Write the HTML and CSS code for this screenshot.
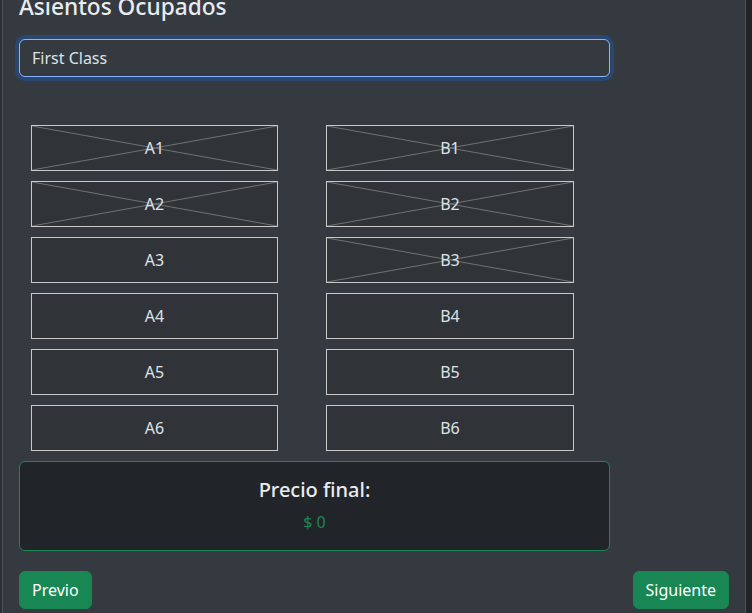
FILE: index.html
```html
<!DOCTYPE html>
<html lang="es">
<head>
<meta charset="utf-8">
<title>Asientos Ocupados</title>
<link rel="stylesheet" href="styles.css">
</head>
<body>
<div class="page">
  <div class="card">
    <h4 class="title">Asientos Ocupados</h4>
    <div class="row">
      <div class="select">First Class</div>
    </div>
    <div class="seats">
      <div class="seat taken"><svg class="cross" viewBox="0 0 100 100" preserveAspectRatio="none"><line x1="0" y1="0" x2="100" y2="100"/><line x1="0" y1="100" x2="100" y2="0"/></svg><span>A1</span></div>
      <div class="seat taken"><svg class="cross" viewBox="0 0 100 100" preserveAspectRatio="none"><line x1="0" y1="0" x2="100" y2="100"/><line x1="0" y1="100" x2="100" y2="0"/></svg><span>B1</span></div>
      <div class="seat taken"><svg class="cross" viewBox="0 0 100 100" preserveAspectRatio="none"><line x1="0" y1="0" x2="100" y2="100"/><line x1="0" y1="100" x2="100" y2="0"/></svg><span>A2</span></div>
      <div class="seat taken"><svg class="cross" viewBox="0 0 100 100" preserveAspectRatio="none"><line x1="0" y1="0" x2="100" y2="100"/><line x1="0" y1="100" x2="100" y2="0"/></svg><span>B2</span></div>
      <div class="seat"><span>A3</span></div>
      <div class="seat taken"><svg class="cross" viewBox="0 0 100 100" preserveAspectRatio="none"><line x1="0" y1="0" x2="100" y2="100"/><line x1="0" y1="100" x2="100" y2="0"/></svg><span>B3</span></div>
      <div class="seat"><span>A4</span></div>
      <div class="seat"><span>B4</span></div>
      <div class="seat"><span>A5</span></div>
      <div class="seat"><span>B5</span></div>
      <div class="seat"><span>A6</span></div>
      <div class="seat"><span>B6</span></div>
    </div>
    <div class="row">
      <div class="price">
        <h5 class="price-title">Precio final:</h5>
        <p class="price-value">$ 0</p>
      </div>
    </div>
    <div class="nav">
      <button class="btn">Previo</button>
      <button class="btn">Siguiente</button>
    </div>
  </div>
</div>
</body>
</html>
```
FILE: styles.css
```css
* { box-sizing: border-box; }
html, body { margin: 0; padding: 0; }
body {
  background: #212529;
  color: #dee2e6;
  font-family: "Noto Sans", "DejaVu Sans", sans-serif;
  font-size: 16px;
  line-height: 1.5;
  overflow: hidden;
}
.page {
  padding-left: 2px;
  width: 746px;
  background: #2b3035;
}
.card {
  margin-top: -8px;
  background: #343a40;
  border: 1px solid #4d5358;
  padding: 0 16px 4px 16px;
  width: 744px;
}
.title {
  margin: 0 0 19px 0;
  font-size: 22.66px;
  font-weight: 500;
  line-height: 27px;
  color: #e9ecef;
}
.row { width: 591px; }
.select {
  height: 38px;
  border: 1px solid #86b7fe;
  border-radius: 6px;
  box-shadow: 0 0 0 4px rgba(13, 110, 253, 0.25);
  padding: 6px 12px;
  line-height: 24px;
  color: #dee2e6;
  background: #343a40;
}
.seats {
  margin-top: 48px;
  padding-left: 12px;
  display: grid;
  grid-template-columns: 247px 248px;
  grid-auto-rows: 46px;
  column-gap: 48px;
  row-gap: 10px;
}
.seat {
  position: relative;
  border: 1px solid #c9c9c9;
  background: #303439;
  display: flex;
  align-items: center;
  justify-content: center;
  font-size: 16px;
  color: #dee2e6;
}
.seat span { position: relative; }
.cross {
  position: absolute;
  left: 0;
  top: 0;
  width: 100%;
  height: 100%;
}
.cross line {
  stroke: #6f7275;
  stroke-width: 1;
  vector-effect: non-scaling-stroke;
}
.price {
  margin-top: 10px;
  height: 90px;
  background: #212529;
  border: 1px solid #198754;
  border-radius: 6px;
  padding: 16px;
  text-align: center;
}
.price-title {
  margin: 0 0 8px 0;
  font-size: 20px;
  font-weight: 500;
  line-height: 24px;
  color: #e9ecef;
}
.price-value {
  margin: 0;
  color: #198754;
  line-height: 24px;
}
.nav {
  margin-top: 20px;
  display: flex;
  justify-content: space-between;
}
.btn {
  font-family: inherit;
  font-size: 16px;
  line-height: 24px;
  height: 38px;
  padding: 6px 12px;
  border: 1px solid #198754;
  border-radius: 6px;
  background: #198754;
  color: #fff;
}
```
